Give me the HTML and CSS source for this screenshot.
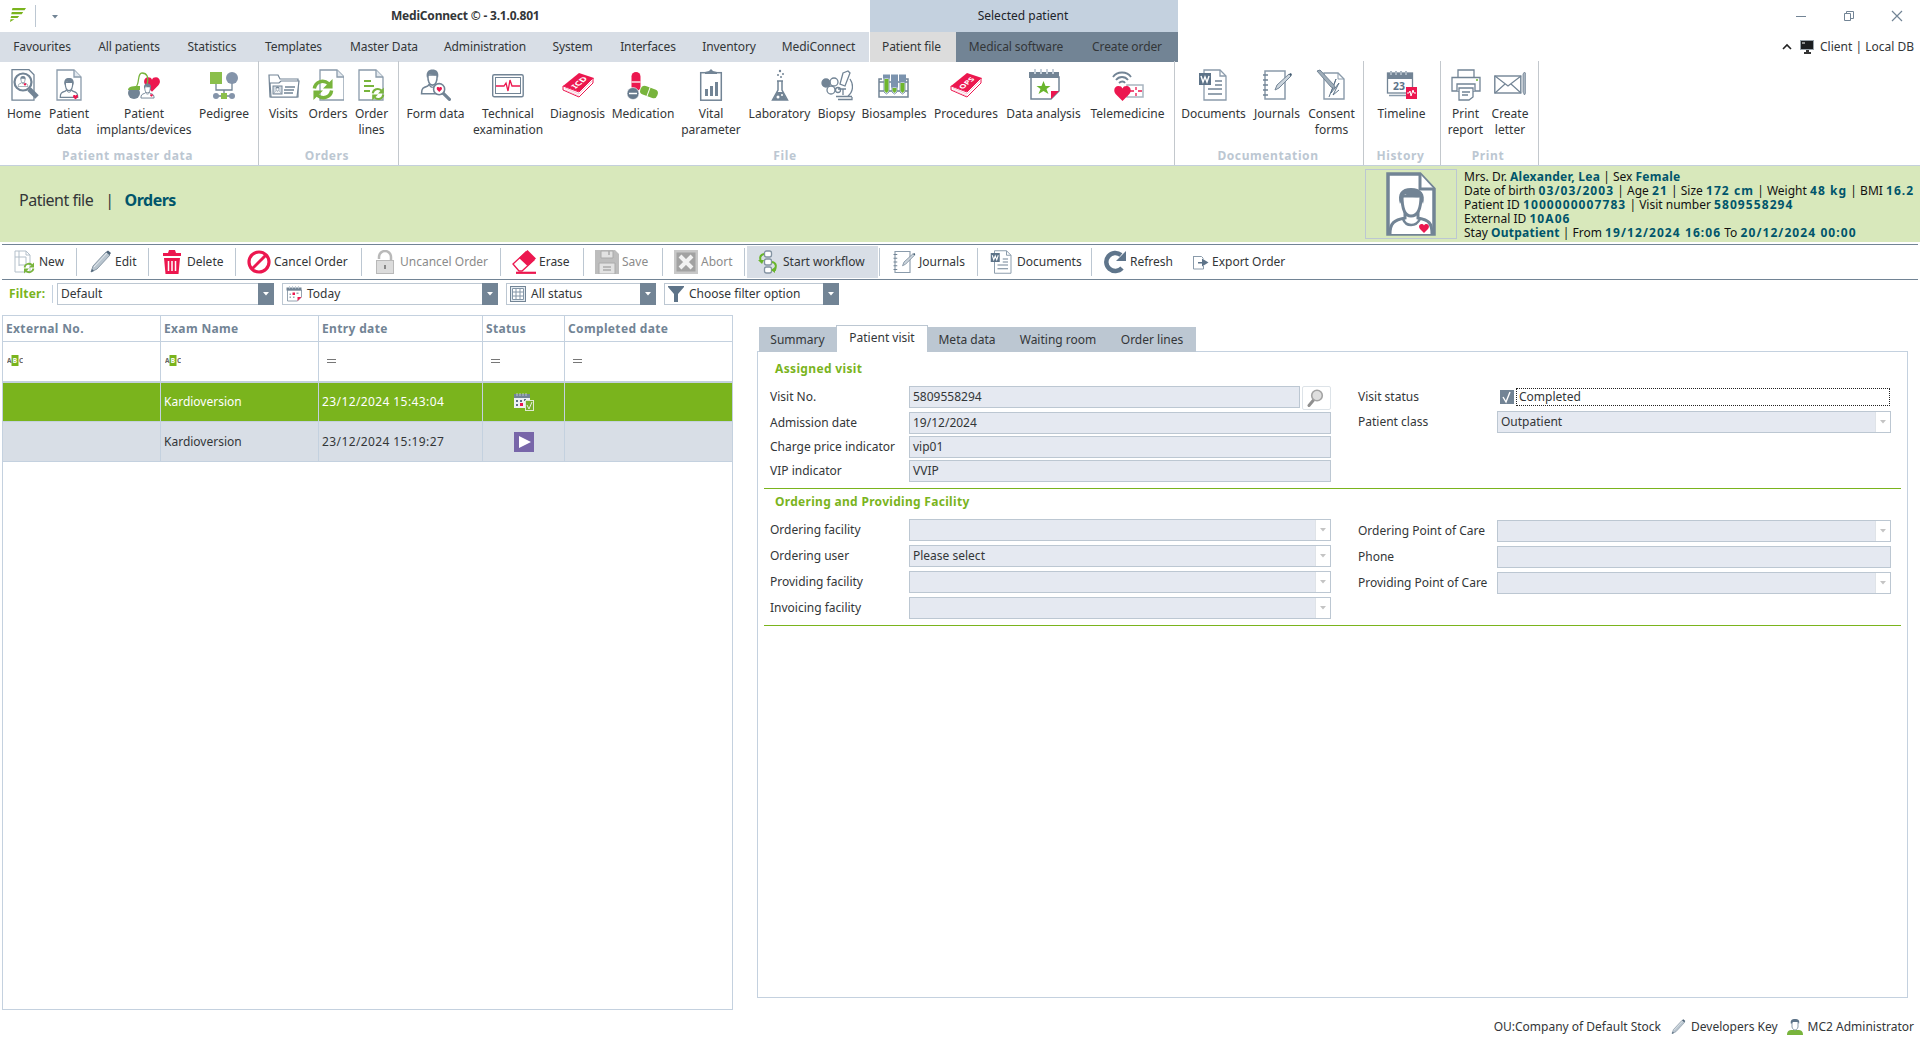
FILE: index.html
```html
<!DOCTYPE html>
<html lang="en">
<head>
<meta charset="utf-8">
<title>MediConnect</title>
<link rel="stylesheet" href="styles.css">
</head>
<body>
<svg class="defs" width="0" height="0">
  <defs>
    <symbol id="page" viewBox="0 0 32 32"><path d="M4 1h17l7 7v23H4z" fill="#fff" stroke="#8a9bab" stroke-width="1.3"/><path d="M21 1v7h7" fill="#e3e9ef" stroke="#8a9bab" stroke-width="1.3"/></symbol>
    <symbol id="person" viewBox="0 0 32 32"><path d="M2 31c0-7 2-8 8-10l2-2h8l2 2c6 2 8 3 8 10z" fill="#fff" stroke="#728495" stroke-width="2"/><path d="M12 19c1 5 7 5 8 0" fill="none" stroke="#728495" stroke-width="1.5"/><path d="M10 7c0 8 2 13 6 13s6-5 6-13z" fill="#fff" stroke="#728495" stroke-width="2"/><path d="M9 11C7 3 11 0 16 0s9 3 7 11l-2-4c-4 1-7-1-9-1z" fill="#728495"/></symbol>
    <symbol id="heart" viewBox="0 0 20 18"><path d="M10 18L2 10C-2 5 1 0 5 0c3 0 4 1 5 3 1-2 2-3 5-3 4 0 7 5 3 10z" fill="#ec174f"/></symbol>
    <symbol id="cycle" viewBox="0 0 24 24"><path d="M3 11C4 4 12 1 18 6" fill="none" stroke="#78b43c" stroke-width="3.6"/><path d="M22 1v10H12z" fill="#78b43c"/><path d="M21 13c-1 7-9 10-15 5" fill="none" stroke="#78b43c" stroke-width="3.6"/><path d="M2 23V13h10z" fill="#78b43c"/></symbol>
    <symbol id="lens" viewBox="0 0 24 24"><path d="M14 14l8 8" stroke="#728495" stroke-width="4" stroke-linecap="round"/><circle cx="9" cy="9" r="7" fill="#fff" stroke="#728495" stroke-width="2"/></symbol>
    <symbol id="pencil" viewBox="0 0 24 24"><path d="M3 22l2-6L18 2l4 3L9 19z" fill="#b9c5cf" stroke="#8a99a6" stroke-width="1"/><path d="M6 17L19 3" stroke="#e6ebef" stroke-width="1"/><path d="M18 2l2-1.500 3 2.500-1.500 2z" fill="#4e6478"/><path d="M3 22l1-3 2 2z" fill="#4e6478"/></symbol>
    <symbol id="book" viewBox="0 0 32 32"><path d="M1 17L17 4l15 5-14 14z" fill="#ec174f"/><path d="M1 17v4l16 7 14-14v-5L17 23z" fill="#fff" stroke="#ec174f" stroke-width="1"/><path d="M3 19l14 6 13-13M3 21l14 6" fill="none" stroke="#f2a3b8" stroke-width=".6"/></symbol>
    <symbol id="cal" viewBox="0 0 32 32"><path d="M3 8v22h20l8-8V8z" fill="#fff" stroke="#728495" stroke-width="1.500"/><path d="M1 3h30v6H1z" fill="#728495"/><path d="M7 0v5M13 0v5M19 0v5M25 0v5" stroke="#c4ced8" stroke-width="2"/></symbol>
    <symbol id="wdoc" viewBox="0 0 32 32"><path d="M6 1h16l6 6v24H6z" fill="#fff" stroke="#8a9bab" stroke-width="1.300"/><path d="M22 1v6h6" fill="none" stroke="#8a9bab" stroke-width="1.300"/><path d="M1 4h12v12H1z" fill="#5d7388"/><path d="M3 7l2 6 2-5 2 5 2-6" fill="none" stroke="#fff" stroke-width="1.400"/><path d="M17 12h7M17 16h7M10 20h14M10 25h14" stroke="#728495" stroke-width="1.600"/></symbol>
    <symbol id="journal" viewBox="0 0 32 32"><path d="M4 2h20v28H4z" fill="#fff" stroke="#8a9bab" stroke-width="1.500"/><path d="M2 6h5M2 11h5M2 16h5M2 21h5M2 26h5" stroke="#728495" stroke-width="1.500"/><path d="M14 21l2-5L28 5l2 2-12 12z" fill="#cbd4dc" stroke="#728495"/><path d="M28 5l2-1 1 2-1 1z" fill="#405a70"/></symbol>
    <symbol id="caret" viewBox="0 0 8 4"><path d="M1 0h6L4 3.500z" fill="currentColor"/></symbol>
    <symbol id="abc" viewBox="0 0 16 12"><rect x="4.500" y="0" width="7" height="11" fill="#7ab41d"/><text class="abc" x="0" y="8">A</text><text class="abc on" x="5.800" y="8">B</text><text class="abc" x="12" y="8">C</text></symbol>
  </defs>
</svg>

<header class="titlebar">
  <svg class="logo" viewBox="0 0 16 14"><path d="M2.500 0H16l-1.500 2.200H1.800zM1.800 4h11.400l-1.500 2.200H1.200zM1.200 8h8L7.500 10H.6zM.5 11.200h4L0 14z" fill="#7ab41d"/></svg>
  <span class="title-sep"></span>
  <svg class="title-caret" width="8" height="4"><use href="#caret"/></svg>
  <span class="app-title">MediConnect © - 3.1.0.801</span>
  <span class="context-title">Selected patient</span>
  <span class="window-buttons">
    <svg width="12" height="12"><path d="M1 6.500h10" stroke="#728495"/></svg>
    <svg width="12" height="12"><path d="M1.500 3.500h6v7h-6zM3.500 3V1.500h7v7H8" fill="none" stroke="#728495"/></svg>
    <svg width="12" height="12"><path d="M1 1l10 10M11 1L1 11" stroke="#728495" stroke-width="1.200"/></svg>
  </span>
</header>

<nav class="menubar">
  <span>Favourites</span><span>All patients</span><span>Statistics</span><span>Templates</span><span>Master Data</span><span>Administration</span><span>System</span><span>Interfaces</span><span>Inventory</span><span>MediConnect</span>
  <span class="active">Patient file</span><span class="dark">Medical software</span><span class="dark">Create order</span>
  <div class="client">
    <svg width="10" height="8"><path d="M1 6l4-4 4 4" fill="none" stroke="#222" stroke-width="1.600"/></svg>
    <svg width="14" height="14"><rect width="14" height="10" fill="#9aa4ad"/><rect x="1" y="1" width="12" height="8" fill="#1b1e21"/><path d="M2 3h3" stroke="#fff"/><path d="M6 10h3v2h2v2H4v-2h2z" fill="#333"/></svg>
    <span>Client | Local DB</span>
  </div>
</nav>

<section class="ribbon">
  <div class="group g1">
    <div class="items">
      <div class="item"><svg viewBox="0 0 32 32"><path d="M4 .7h17l5 5v25.500H4z" fill="#fff" stroke="#728495" stroke-width="1.300"/><path d="M21 20l8 8" stroke="#728495" stroke-width="5"/><circle cx="15" cy="13" r="8.500" fill="#fff" stroke="#728495" stroke-width="2.200"/><use href="#person" x="9.500" y="7" width="11" height="11"/><use href="#heart" x="15.500" y="14" width="3" height="3"/></svg>Home</div>
      <div class="item"><svg viewBox="0 0 32 32"><use href="#page"/><use href="#person" x="6" y="8" width="20" height="22"/><use href="#heart" x="20" y="26" width="5" height="4.500"/></svg>Patient<br>data</div>
      <div class="item"><svg viewBox="0 0 32 32"><use href="#heart" x="16" y="8" width="16" height="15"/><path d="M8 18C12 14 9 4 14 4s7 4 5 12" fill="none" stroke="#78b43c" stroke-width="1.300"/><circle cx="6" cy="24" r="6" fill="#728495"/><path d="M0 21c0-4 6-4 12-4v4z" fill="#78b43c"/><use href="#person" x="12" y="14" width="15" height="16"/><use href="#heart" x="22" y="25" width="3" height="3"/></svg>Patient<br>implants/devices</div>
      <div class="item"><svg viewBox="0 0 32 32"><path d="M8 14v7h16v-7M16 21v6M9 27h14" fill="none" stroke="#728495" stroke-width="1.300"/><rect x="2" y="3" width="12" height="12" fill="#8bbf4b"/><circle cx="24" cy="9" r="6" fill="#8494aa"/><circle cx="8" cy="27" r="3" fill="#8494aa"/><circle cx="24" cy="27" r="3" fill="#8494aa"/><rect x="13" y="24" width="6" height="6" fill="#8bbf4b"/></svg>Pedigree</div>
    </div>
    <div class="group-title">Patient master data</div>
  </div>
  <div class="group g2">
    <div class="items">
      <div class="item"><svg viewBox="0 0 32 32"><path d="M2 28L1 6h9l2 4h18v18z" fill="#fff" stroke="#728495" stroke-width="1.200"/><path d="M3 28l-1-14h9l2-2h18l-2 16z" fill="#fff" stroke="#728495" stroke-width="1.200"/><rect x="5" y="17" width="9" height="8" fill="#d5dce3" stroke="#728495"/><use href="#person" x="6" y="17" width="7" height="8"/><path d="M17 18h10M16 21h10M16 24h9" stroke="#728495" stroke-width="1.400"/></svg>Visits</div>
      <div class="item"><svg viewBox="0 0 32 32"><use href="#page" x="4" y="0"/><use href="#cycle" x="-1" y="9" width="24" height="23"/></svg>Orders</div>
      <div class="item"><svg viewBox="0 0 32 32"><use href="#page" x="-1"/><path d="M8 12h7M8 17h10M8 22h6" stroke="#78b43c" stroke-width="1.800"/><use href="#cycle" x="15" y="18" width="14" height="14"/></svg>Order<br>lines</div>
    </div>
    <div class="group-title">Orders</div>
  </div>
  <div class="group g3">
    <div class="items">
      <div class="item"><svg viewBox="0 0 32 32"><use href="#person" x="0" y="0" width="25" height="26"/><use href="#lens" x="12" y="13" width="19" height="19"/><use href="#heart" x="16.500" y="18" width="5.500" height="5"/></svg>Form data</div>
      <div class="item"><svg viewBox="0 0 32 32"><rect x=".7" y="5.700" width="30.500" height="22" rx="1.500" fill="#fff" stroke="#728495" stroke-width="1.400"/><rect x="3.500" y="8.500" width="25" height="16" fill="none" stroke="#728495"/><path d="M4 17h8l2-3 2 8 2-11 2 6h8" fill="none" stroke="#ec174f" stroke-width="1.300"/></svg>Technical<br>examination</div>
      <div class="item"><svg viewBox="0 0 32 32"><use href="#book"/><text class="cover" transform="matrix(.75 -.62 .7 .4 13.500 20)">ICD</text></svg>Diagnosis</div>
      <div class="item"><svg viewBox="0 0 32 32"><rect x="4.500" y="3" width="9" height="19" rx="4.500" fill="#ec174f"/><path d="M4.500 13h9" stroke="#fff" stroke-width="1.300"/><g transform="rotate(20 22 23)"><rect x="13" y="18.500" width="18" height="9" rx="4" fill="#78b43c"/><path d="M21.500 18v10" stroke="#fff"/></g><circle cx="6" cy="24.500" r="6" fill="#66798c" stroke="#fff" stroke-width=".6"/><path d="M2 24.500h8" stroke="#fff" stroke-width="1.500"/></svg>Medication</div>
      <div class="item"><svg viewBox="0 0 32 32"><rect x="5.700" y="3.700" width="20.600" height="27.500" fill="#fff" stroke="#728495" stroke-width="1.500"/><path d="M10 5V3l4-1 2-2 2 2 4 1v2z" fill="#728495"/><path d="M10 20h3v7h-3zM15 17h3v10h-3zM20 13h3v14h-3z" fill="#728495"/></svg>Vital<br>parameter</div>
      <div class="item"><svg viewBox="0 0 32 32"><path d="M13 12h6M14 12v9L8.500 31h15L18 21v-9" fill="#fff" stroke="#728495" stroke-width="1.500"/><path d="M13 23h6l4 8H9z" fill="#728495"/><circle cx="14" cy="28" r="1.500" fill="#fff"/><circle cx="18" cy="26" r="1" fill="#fff"/><circle cx="14" cy="6" r="1" fill="#728495"/><circle cx="19" cy="5" r="1" fill="#728495"/><circle cx="16" cy="2" r="1.200" fill="#728495"/><circle cx="17" cy="8" r="1" fill="#728495"/></svg>Laboratory</div>
      <div class="item"><svg viewBox="0 0 32 32" fill="none" stroke="#728495" stroke-width="1.300"><path d="M22 4l5-2 2 2-5 13-5-2zM29 10c4 6 3 13-2 17M15 27.500h16M17 30.500h14V28M17 20h8M22 20v6"/><circle cx="5" cy="14" r="4" fill="#728495"/><circle cx="13" cy="13" r="4"/><circle cx="10" cy="21" r="4"/><circle cx="17" cy="21" r="2.500"/></svg>Biopsy</div>
      <div class="item"><svg viewBox="0 0 32 32"><path d="M4 10H1v18h29V10h-4M1 13h29M1 22h29" fill="none" stroke="#728495" stroke-width="1.500"/><g stroke="#7b93ae" fill="#fff"><path d="M6 6.500h5V23l-2.500 2L6 23zM14 6.500h5V23l-2.500 2-2.500-2zM22 6.500h5V23l-2.500 2-2.500-2z"/></g><path d="M5 5.500h7v4H5zM13 5.500h7v13h-7zM21 5.500h7v8h-7z" fill="#7b93ae"/><path d="M6.500 10h4v12l-2 2-2-2zM14.500 19h4v3l-2 2-2-2zM22.500 14h4v8l-2 2-2-2z" fill="#6fb62c"/></svg>Biosamples</div>
      <div class="item"><svg viewBox="0 0 32 32"><use href="#book"/><text class="cover small" transform="matrix(.75 -.62 .7 .4 12.500 20.500)">OPS</text></svg>Procedures</div>
      <div class="item"><svg viewBox="0 0 32 32"><use href="#cal"/><path d="M15.500 12l2 5h5l-4 3 2 5-5-3-5 3 2-5-4-3h5z" fill="#69b52c"/><path d="M23 30v-8h8z" fill="#ec174f"/></svg>Data analysis</div>
      <div class="item"><svg viewBox="0 0 32 32"><g fill="none" stroke="#728495" stroke-width="1.800"><path d="M1 8c4-6 14-6 18 0M4 11c3-4 9-4 12 0M7 14c2-2 5-2 6 0"/></g><rect x="15" y="16" width="16" height="12" fill="#fff" stroke="#a9b5c0" stroke-width="1.500"/><path d="M18 22h4M26 22h4M24 18v3M24 24v3" stroke="#ec174f" stroke-width="1.300"/><use href="#heart" x="2" y="17" width="17" height="15"/></svg>Telemedicine</div>
    </div>
    <div class="group-title">File</div>
  </div>
  <div class="group g4">
    <div class="items">
      <div class="item"><svg viewBox="0 0 32 32"><use href="#wdoc"/></svg>Documents</div>
      <div class="item"><svg viewBox="0 0 32 32"><use href="#journal"/></svg>Journals</div>
      <div class="item"><svg viewBox="0 0 32 32"><path d="M8 4h14l6 6v20H8z" fill="#fff" stroke="#8a9bab" stroke-width="1.400"/><path d="M22 4v6h6" fill="none" stroke="#8a9bab"/><path d="M13 28l7-18-5 14 8-10-6 12 6-5" fill="none" stroke="#5d7388"/><path d="M1 2l3-1 14 15 1 4-4-2z" fill="#9fadb9" stroke="#728495"/></svg>Consent<br>forms</div>
    </div>
    <div class="group-title">Documentation</div>
  </div>
  <div class="group g5">
    <div class="items">
      <div class="item"><svg viewBox="0 0 32 32"><rect x="1.500" y="4" width="25" height="20" fill="#fff" stroke="#728495" stroke-width="1.300"/><path d="M1 4h26v6H1z" fill="#728495"/><path d="M5 2v4M10 2v4M15 2v4M20 2v4" stroke="#a9b5c0" stroke-width="2"/><path d="M3 26.500h17" stroke="#8a9bab" stroke-width="1.500"/><text class="day" x="7" y="20.500">23</text><rect x="20" y="18" width="11" height="12" fill="#ec174f"/><path d="M21 24h2l1-2 1 5 2-6 1 3h2" fill="none" stroke="#fff"/></svg>Timeline</div>
    </div>
    <div class="group-title">History</div>
  </div>
  <div class="group g6">
    <div class="items">
      <div class="item"><svg viewBox="0 0 32 32"><g fill="#fff" stroke="#728495" stroke-width="1.300"><path d="M8 8V1h16v7M2 8.500h28V22H2z"/><path d="M7 22v-7h18v7"/><path d="M9 19h14v9l-4 3H9z"/><path d="M12 23h8M12 26h6"/></g><circle cx="27" cy="11" r="1" fill="#69b52c"/></svg>Print<br>report</div>
      <div class="item"><svg viewBox="0 0 32 32"><rect x=".8" y="7" width="26" height="17" fill="#fff" stroke="#728495" stroke-width="1.400"/><path d="M1 7l13 10L27 7M1 24l10-9M27 24l-10-9" fill="none" stroke="#728495" stroke-width="1.200"/><path d="M29 5l1.500-2L32 5v18l-1.500 3-1.500-3z" fill="#a9b5c0" stroke="#728495" stroke-width=".8"/></svg>Create<br>letter</div>
    </div>
    <div class="group-title">Print</div>
  </div>
</section>

<section class="patient-band">
  <div class="crumbs"><span>Patient file</span><span class="bar">|</span><b>Orders</b></div>
  <div class="photo"><svg width="50" height="64" viewBox="0 0 50 64"><path d="M2 2h32l14 15v45H2z" fill="#fff" stroke="#728495" stroke-width="3.500"/><path d="M34 2v15h14" fill="#fff" stroke="#728495" stroke-width="3"/><path d="M4 62c0-11 4-14 15-16v-6h13v6c11 2 14 5 14 16" fill="#fff" stroke="#728495" stroke-width="3"/><path d="M17 47c3 8 13 8 17 0" fill="none" stroke="#728495" stroke-width="2.500"/><path d="M16 24c0 14 3 20 9 20s10-6 10-20z" fill="#fff" stroke="#728495" stroke-width="3"/><path d="M14 32c-3-10 1-16 11-16s15 6 12 16l-3-7c-7 1-12-1-15-3z" fill="#728495"/><use href="#heart" x="33" y="52" width="10" height="9"/></svg></div>
  <div class="patient-info">
    <p>Mrs. Dr. <b>Alexander, Lea</b> | Sex <b>Female</b></p>
    <p>Date of birth <b class="num">03/03/2003</b> | Age <b class="num">21</b> | Size <b class="num">172 cm</b> | Weight <b class="num">48 kg</b> | BMI <b class="num">16.2</b></p>
    <p>Patient ID <b class="num">1000000007783</b> | Visit number <b class="num">5809558294</b></p>
    <p>External ID <b class="num">10A06</b></p>
    <p>Stay <b>Outpatient</b> | From <b class="num">19/12/2024 16:06</b> To <b class="num">20/12/2024 00:00</b></p>
  </div>
</section>

<section class="toolbar">
  <div class="tool t1"><svg viewBox="0 0 24 24"><path d="M3 1h11l4 4v17H3z" fill="#fff" stroke="#b3bfca"/><path d="M7 1v15M3 7h11v8H7M14 1v4h4" fill="none" stroke="#b3bfca"/><use href="#cycle" x="11" y="12" width="12" height="12"/></svg>New</div>
  <div class="tool t2"><svg viewBox="0 0 24 24"><use href="#pencil"/></svg>Edit</div>
  <div class="tool t3"><svg viewBox="0 0 24 24"><path d="M3 3h5l1-3h6l1 3h5v3H3zM4 8h16l-1.500 16h-13z" fill="#ec174f"/><path d="M8.500 11v10M12 11v10M15.500 11v10" stroke="#fff" stroke-width="1.500"/></svg>Delete</div>
  <div class="tool t4"><svg viewBox="0 0 24 24"><circle cx="12" cy="12" r="10" fill="none" stroke="#ec174f" stroke-width="3.200"/><path d="M19 5L5 19" stroke="#ec174f" stroke-width="3"/></svg>Cancel Order</div>
  <div class="tool t5 off"><svg viewBox="0 0 24 24"><path d="M6 9V7a6 6 0 0 1 12 0v6" fill="none" stroke="#b9b9b9" stroke-width="2.500"/><rect x="3.500" y="10.500" width="17" height="13" fill="#dcdcdc" stroke="#b9b9b9"/><path d="M12 15v4" stroke="#888" stroke-width="2"/></svg>Uncancel Order</div>
  <div class="tool t6"><svg viewBox="0 0 24 24"><path d="M1 14L14 2l8 8-12 11H7z" fill="#fff" stroke="#ec174f" stroke-width="1.300"/><path d="M7 8l8.500-8L24 8.500 15.500 16z" fill="#ec174f"/><path d="M4 22.800h20" stroke="#ec174f" stroke-width="2.200"/></svg>Erase</div>
  <div class="tool t7 off"><svg viewBox="0 0 24 24"><path d="M0 0h20l4 4v20H0z" fill="#bdbdbd"/><path d="M6 1h12v7H6zM4 13h16v11H4z" fill="#e2e2e2" stroke="#aaa"/><path d="M14 1v4M8 17h8M8 20h8" stroke="#aaa" stroke-width="1.500"/></svg>Save</div>
  <div class="tool t8 off"><svg viewBox="0 0 24 24"><rect width="24" height="24" fill="#c8c8c8"/><rect x="2.500" y="2.500" width="19" height="19" fill="#a2a2a2"/><path d="M6 6l12 12M18 6L6 18" stroke="#f2f2f2" stroke-width="4"/></svg>Abort</div>
  <div class="tool t9"><span class="hot"></span><svg viewBox="0 0 24 24"><g fill="#fff" stroke="#8393a2" stroke-width="1.300"><rect x="8.500" y="1" width="7" height="6" rx="2"/><rect x="8.500" y="9" width="7" height="6" rx="2"/><rect x="8.500" y="17" width="7" height="6" rx="2"/></g><path d="M8 4C3 5 4 9 5 12M16 12c5 1 4 5 3 8h-3" fill="none" stroke="#69b52c" stroke-width="2"/><path d="M2 10h6l-2 4zM19 17v6l-4-3z" fill="#69b52c"/></svg>Start workflow</div>
  <div class="tool t10"><svg viewBox="0 0 32 32"><use href="#journal"/></svg>Journals</div>
  <div class="tool t11"><svg viewBox="0 0 32 32"><use href="#wdoc"/></svg>Documents</div>
  <div class="tool t12"><svg viewBox="0 0 24 24"><path d="M19 18A9 9 0 1 1 18 5" fill="none" stroke="#5f758b" stroke-width="4.500"/><path d="M23 1v10H13z" fill="#5f758b"/></svg>Refresh</div>
  <div class="tool t13"><svg viewBox="0 0 16 16"><path d="M.5 2.500h8l2 2M.5 2v13h10v-3" fill="none" stroke="#8a9bab"/><path d="M5 8h4V4.500l6.500 4L9 12.500V9.500H5z" fill="#5d7388"/></svg>Export Order</div>
</section>

<section class="filters">
  <b>Filter:</b><span class="fsep"></span>
  <div class="combo c1"><span>Default</span><i><svg width="8" height="4"><use href="#caret"/></svg></i></div>
  <div class="combo c2"><svg class="ico" viewBox="0 0 32 32"><use href="#cal"/><path d="M7 15h3v3H7zM21 13h4v3h-4zM7 21h3v3H7zM14 21h3v3h-3z" fill="#9aa8b5"/><path d="M13 13h5v5h-5zM23 30v-8h8z" fill="#ec174f"/></svg><span>Today</span><i><svg width="8" height="4"><use href="#caret"/></svg></i></div>
  <div class="combo c3"><svg class="ico" viewBox="0 0 16 16"><rect x=".5" y=".5" width="15" height="15" fill="#e3eaf0" stroke="#728495"/><g fill="#fff" stroke="#8496a7"><path d="M2.500 2.500h11v11h-11zM6 2.500v11M10 2.500v11M2.500 6h11M2.500 10h11"/></g></svg><span>All status</span><i><svg width="8" height="4"><use href="#caret"/></svg></i></div>
  <div class="combo c4"><svg class="ico" viewBox="0 0 16 16"><path d="M0 0h16v1l-6 7v8H6V8L0 1z" fill="#5d7388"/></svg><span>Choose filter option</span><i><svg width="8" height="4"><use href="#caret"/></svg></i></div>
</section>

<main class="workspace">
  <div class="grid">
    <div class="row head"><span>External No.</span><span>Exam Name</span><span>Entry date</span><span>Status</span><span>Completed date</span></div>
    <div class="row search"><span><svg width="16" height="12"><use href="#abc"/></svg></span><span><svg width="16" height="12"><use href="#abc"/></svg></span><span><i class="eq"></i></span><span><i class="eq"></i></span><span><i class="eq"></i></span></div>
    <div class="row selected"><span></span><span>Kardioversion</span><span class="date">23/12/2024 15:43:04</span><span class="status"><svg width="20" height="18" viewBox="0 0 20 18"><path d="M0 2h16v13H0z" fill="#eef1f4"/><path d="M0 1h16v4H0z" fill="#728495"/><path d="M3 0v3M6 0v3M9 0v3M12 0v3" stroke="#b9c4ce"/><path d="M2 7h2v2H2zM6 7h2v2H6zM10 6h2v2h-2zM2 11h2v2H2z" fill="#5d7388"/><path d="M6 10h3v3H6z" fill="#ec174f"/><rect x="11.500" y="7.500" width="8" height="10" fill="#78b02c" stroke="#dfe9cf"/><path d="M13 12l2 4 3-7" fill="none" stroke="#e9f2dc" stroke-width="1"/></svg></span><span></span></div>
    <div class="row alt"><span></span><span>Kardioversion</span><span class="date">23/12/2024 15:19:27</span><span class="status"><svg width="20" height="20"><rect width="20" height="20" fill="#7866a9"/><path d="M5 4l12 6-12 6z" fill="#fff"/></svg></span><span></span></div>
    <div class="row rest"></div>
  </div>

  <div class="detail">
    <div class="tabs"><span>Summary</span><span class="on">Patient visit</span><span>Meta data</span><span>Waiting room</span><span>Order lines</span></div>
    <div class="panel">
      <section class="block b1">
        <h3>Assigned visit</h3>
        <div class="cols">
          <div class="left">
            <div class="field"><label>Visit No.</label><div class="box narrow">5809558294</div><div class="find"><svg width="18" height="18" viewBox="0 0 18 18"><path d="M2 16.500l5-6" stroke="#8f8f8f" stroke-width="3" stroke-linecap="round"/><circle cx="10" cy="6.500" r="5.300" fill="#dedede" stroke="#a3a3a3" stroke-width="1.600"/></svg></div></div>
            <div class="field"><label>Admission date</label><div class="box">19/12/2024</div></div>
            <div class="field"><label>Charge price indicator</label><div class="box">vip01</div></div>
            <div class="field"><label>VIP indicator</label><div class="box">VVIP</div></div>
          </div>
          <div class="right">
            <div class="field"><label>Visit status</label><div class="check"><svg width="14" height="14"><rect width="14" height="14" fill="#728495"/><path d="M3 7l3 5 4-10" fill="none" stroke="#fff" stroke-width="1.400"/></svg><span>Completed</span></div></div>
            <div class="field"><label>Patient class</label><div class="box drop">Outpatient<i><svg width="8" height="4"><use href="#caret"/></svg></i></div></div>
          </div>
        </div>
      </section>
      <section class="block b2">
        <h3>Ordering and Providing Facility</h3>
        <div class="cols">
          <div class="left">
            <div class="field"><label>Ordering facility</label><div class="box drop"><i><svg width="8" height="4"><use href="#caret"/></svg></i></div></div>
            <div class="field"><label>Ordering user</label><div class="box drop">Please select<i><svg width="8" height="4"><use href="#caret"/></svg></i></div></div>
            <div class="field"><label>Providing facility</label><div class="box drop"><i><svg width="8" height="4"><use href="#caret"/></svg></i></div></div>
            <div class="field"><label>Invoicing facility</label><div class="box drop"><i><svg width="8" height="4"><use href="#caret"/></svg></i></div></div>
          </div>
          <div class="right">
            <div class="field"><label>Ordering Point of Care</label><div class="box drop"><i><svg width="8" height="4"><use href="#caret"/></svg></i></div></div>
            <div class="field"><label>Phone</label><div class="box"></div></div>
            <div class="field"><label>Providing Point of Care</label><div class="box drop"><i><svg width="8" height="4"><use href="#caret"/></svg></i></div></div>
          </div>
        </div>
      </section>
    </div>
  </div>
</main>

<footer class="statusbar">
  <span class="ou">OU:Company of Default Stock</span>
  <svg width="16" height="16" viewBox="0 0 24 24"><use href="#pencil"/></svg><span class="dev">Developers Key</span>
  <svg width="16" height="16" viewBox="0 0 16 16"><path d="M0 16c0-4 2-5 5-5h6c3 0 5 1 5 5z" fill="#78b43c"/><path d="M5 3v5c1 4 5 4 6 0V3" fill="#fff" stroke="#8a9bab"/><path d="M4 5c-1-4 1-5 4-5s5 1 4 5l-1-2H6z" fill="#5d7388"/></svg><span>MC2 Administrator</span>
</footer>
</body>
</html>
```
FILE: styles.css
```css
* { box-sizing: border-box; }
body {
  margin: 0;
  width: 1920px;
  height: 1040px;
  overflow: hidden;
  background: #fff;
  color: #333638;
  font: 12px/16px "Noto Sans", sans-serif;
  white-space: nowrap;
  display: flex;
  flex-direction: column;
}
svg { display: block; flex: none; }
.defs { position: absolute; }
p, h3 { margin: 0; }

/* title bar */
.titlebar { height: 32px; display: flex; align-items: center; flex: none; padding-left: 10px; }
.logo { width: 16px; height: 14px; margin-top: -2px; }
.title-sep { width: 1px; height: 22px; background: #bcc7d2; margin-left: 9px; }
.title-caret { color: #728495; margin-left: 15px; margin-top: 2px; }
.app-title { font-weight: 700; letter-spacing: -.2px; margin-left: 332px; width: 479px; }
.context-title { width: 308px; height: 32px; line-height: 31px; background: #c4d1df; text-align: center; color: #1c2329; padding-right: 2px; }
.window-buttons { display: flex; gap: 36px; margin-left: 617px; }

/* menu bar */
.menubar { height: 29px; flex: none; display: grid; grid-template-columns: 85px 89px 77px 86px 95px 107px 68px 83px 79px 100px 87px 123px 99px 1fr; line-height: 30px; text-align: center; letter-spacing: -.1px; }
.menubar > span { background: #d8dee6; padding-right: 1px; }
.menubar > .active { background: #dcdcdc; border-left: 1px solid #fff; padding-right: 3px; }
.menubar > .dark { background: #728495; padding-right: 3px; }
.client { display: flex; align-items: center; justify-content: flex-end; padding-right: 6px; gap: 6px; letter-spacing: 0; }
.client svg:first-child { margin-right: 2px; }

/* ribbon */
.ribbon { height: 105px; flex: none; display: flex; border-bottom: 1px solid #c4d0dc; }
.group { border-right: 1px solid #c3c8cd; display: flex; flex-direction: column; justify-content: space-between; padding: 8px 2px 1px; }
.g1 { width: 259px; }
.g2 { width: 140px; }
.g3 { width: 776px; }
.g4 { width: 189px; padding-left: 3px; }
.g5 { width: 77px; padding-inline: 0; }
.g6 { width: 98px; }
.items { display: grid; }
.g1 .items { grid-template-columns: 44px 46px 104px 56px; }
.g2 .items { grid-template-columns: 45px 44px 43px; }
.g3 .items { grid-template-columns: 69px 76px 63px 68px 68px 69px 45px 70px 74px 81px 87px; }
.g4 .items { grid-template-columns: 71px 56px 53px; }
.g5 .items { grid-template-columns: 75px; }
.g6 .items { grid-template-columns: 45px 44px; }
.item { display: flow-root; text-align: center; margin-inline: -10px; }
.item svg { width: 32px; height: 32px; margin: 0 auto 5px; }
.group-title { text-align: center; font-weight: 700; color: #bcc7d2; letter-spacing: .6px; padding-right: 3px; }
.cover { font: 700 9.500px "Noto Sans", sans-serif; fill: #fff; }
.cover.small { font-size: 8.500px; }
.day { font: 700 10.500px "Noto Sans", sans-serif; fill: #5d7388; }
.abc { font: 700 6.500px "Noto Sans", sans-serif; fill: #666; }
.abc.on { fill: #fff; }

/* patient band */
.patient-band { height: 76px; flex: none; background: #d8e8bb; display: flex; align-items: center; }
.crumbs { display: flex; font-size: 16px; line-height: 20px; width: 1365px; padding: 0 0 8px 19px; letter-spacing: -.5px; }
.crumbs .bar { margin: 0 11px 0 12px; }
.crumbs b, .patient-info b { color: #00556b; }
.photo { width: 92px; height: 70px; border: 1px solid #bcc7d2; display: grid; place-items: center; }
.patient-info { margin-left: 7px; padding-top: 1px; line-height: 14px; color: #111; }
.patient-info p { height: 14px; }
.patient-info b { letter-spacing: .25px; }
.patient-info .num { letter-spacing: 1.080px; }

/* toolbar */
.toolbar { height: 36px; flex: none; margin: 2px 2px 0; border-top: 1px solid #728495; border-bottom: 1px solid #728495; display: flex; align-items: center; }
.tool { position: relative; height: 28px; display: flex; align-items: center; gap: 3px; padding-left: 11px; border-right: 1px solid #bcc7d2; line-height: 18px; }
.tool svg { width: 24px; height: 24px; }
.off { color: #8b8b8b; }
.t1 { width: 75px; padding-left: 10px; } .t2 { width: 72px; } .t3 { width: 87px; } .t4 { width: 126px; }
.t5 { width: 139px; } .t6 { width: 83px; } .t7 { width: 79px; } .t8 { width: 82px; } .t9 { width: 135px; z-index: 0; }
.t10 { width: 98px; padding-left: 12px; } .t11 { width: 114px; padding-left: 12px; } .t12 { width: 101px; border: 0; } .t13 { border: 0; padding-left: 0; }
.t13 svg { width: 16px; height: 16px; }
.hot { position: absolute; inset: -2px 1px -2px 2px; background: #d8dee6; z-index: -1; }

/* filters */
.filters { height: 22px; flex: none; margin-top: 3px; display: flex; align-items: center; padding-left: 9px; }
.filters > b { color: #7ab41d; width: 43px; letter-spacing: .2px; }
.fsep { width: 1px; height: 18px; background: #c4d1df; margin-right: 4px; }
.combo { height: 22px; border: 1px solid #bcc7d2; display: flex; align-items: center; padding-left: 3px; margin-right: 8px; }
.combo .ico { width: 16px; height: 16px; margin-right: 5px; }
.combo span { flex: 1; }
.combo i { width: 16px; align-self: stretch; background: #728495; color: #fff; display: grid; place-items: center; margin: -1px -1px -1px 0; }
.c1 { width: 217px; } .c2 { width: 216px; } .c3 { width: 150px; } .c4 { width: 175px; }

/* workspace */
.workspace { display: flex; flex: none; margin: 10px 0 0 2px; height: 695px; }
.grid { width: 731px; border: 1px solid #c4d1df; display: grid; grid-template-rows: 26px 41px 39px 40px 1fr; }
.row { display: grid; grid-template-columns: 158px 158px 164px 82px 1fr; border-bottom: 1px solid #c4d1df; }
.row > span { display: flex; align-items: center; padding-left: 3px; border-right: 1px solid #c4d1df; }
.row > span:last-child, .row.rest { border: 0; }
.head { font-weight: 700; color: #728495; letter-spacing: .35px; line-height: 15px; }
.head > span { padding-bottom: 1px; }
.search { border-bottom-width: 2px; }
.search > span { padding: 0 0 2px 4px; }
.eq { width: 9px; height: 4px; border: 1px solid #777; border-width: 1px 0; margin-left: 4px; }
.selected { background: #7ab41d; color: #fff; }
.alt { background: #d8dee6; }
.date { letter-spacing: .4px; }
.row > .status { justify-content: center; padding: 0; }

.detail { margin: 10px 0 0 24px; width: 1151px; display: flex; flex-direction: column; height: 673px; }
.tabs { height: 27px; display: flex; align-items: flex-end; padding-left: 2px; text-align: center; margin-bottom: -1px; position: relative; }
.tabs span { height: 25px; line-height: 25px; background: #bcc7d2; width: 78px; }
.tabs span:nth-child(1) { width: 77px; }
.tabs span:nth-child(4) { width: 104px; }
.tabs span:nth-child(5) { width: 86px; padding-right: 2px; }
.tabs .on { background: #fff; height: 27px; width: 92px; border: 1px solid #bcc7d2; border-bottom: 0; line-height: 24px; }
.panel { flex: 1; border: 1px solid #c4d1df; padding: 9px 6px 0; }
.block { border-bottom: 1px solid #7ab41d; padding-left: 6px; }
.b1 { height: 128px; }
.b2 { height: 137px; padding-top: 5px; }
h3 { font: inherit; font-weight: 700; color: #7ab41d; padding-left: 5px; height: 25px; letter-spacing: .35px; }
.b2 h3 { height: 25px; letter-spacing: .3px; }
.cols { display: flex; gap: 27px; }
.left { width: 561px; }
.right { width: 533px; }
.field { display: flex; height: 26px; align-items: flex-start; line-height: 20px; }
.field label { width: 139px; padding-top: 1px; }
.box { height: 22px; flex: 1; border: 1px solid #bcc7d2; background: #e5e9f1; padding-left: 3px; display: flex; }
.narrow { flex: none; width: 391px; }
.find { width: 29px; height: 24px; margin-left: 2px; border: 1px solid #dde3e8; border-radius: 2px; display: grid; place-items: center start; padding-left: 4px; }
.box i { width: 15px; margin-left: auto; background: #fff; border-left: 1px solid #dfe3e8; color: #c4c4c4; display: grid; place-items: center; }
.b1 .left .field:nth-child(n+2) { height: 24px; }
.b1 .right .field:first-child { height: 25px; }
.b2 .right { padding-top: 1px; }
.check { flex: 1; display: flex; padding: 2px 1px 0 3px; gap: 2px; }
.check svg { margin-top: 2px; }
.check span { flex: 1; height: 18px; border: 1px dotted #222; line-height: 15px; padding-left: 2px; }

/* status bar */
.statusbar { display: flex; align-items: center; justify-content: flex-end; padding-right: 6px; height: 26px; margin-top: 4px; gap: 5px; }
.ou, .dev { margin-right: 4px; }
```
